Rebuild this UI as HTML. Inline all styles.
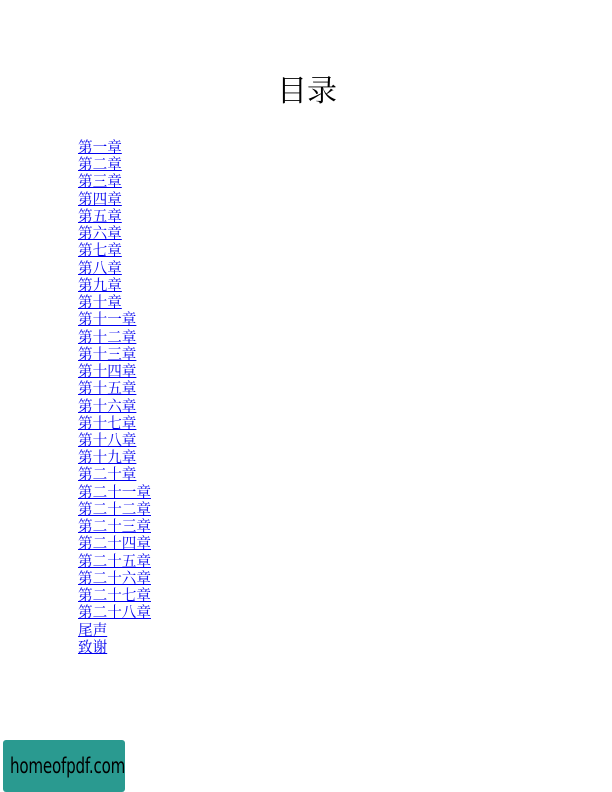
<!DOCTYPE html>
<html><head><meta charset="utf-8"><style>
body{margin:0;width:612px;height:792px;background:#fff;position:relative;overflow:hidden;font-family:"Liberation Serif","Noto Serif CJK SC",serif}
h1{position:absolute;top:72px;left:0;width:614px;text-align:center;margin:0;font-weight:normal;font-size:30px;line-height:40px;font-family:"Liberation Serif","Noto Serif CJK SC",serif}
ul{position:absolute;top:140px;left:78px;margin:0;padding:0;list-style:none}
li{height:17.24px;line-height:17.24px;font-size:14.6px;white-space:nowrap}
a{color:#0000ee;text-decoration:underline}
.logo{position:absolute;left:3px;top:740px;width:122px;height:52px;background:#2a9a90;border-radius:3px;overflow:hidden}
.logo span{position:absolute;left:7px;top:13px;font-family:"DejaVu Sans",sans-serif;font-size:21px;line-height:26px;color:#000;white-space:nowrap;transform:scaleX(0.72);transform-origin:0 0;letter-spacing:-0.3px}
</style></head><body>
<h1>目录</h1>
<ul>
<li><a>第一章</a></li><li><a>第二章</a></li><li><a>第三章</a></li><li><a>第四章</a></li><li><a>第五章</a></li><li><a>第六章</a></li><li><a>第七章</a></li><li><a>第八章</a></li><li><a>第九章</a></li><li><a>第十章</a></li>
<li><a>第十一章</a></li><li><a>第十二章</a></li><li><a>第十三章</a></li><li><a>第十四章</a></li><li><a>第十五章</a></li><li><a>第十六章</a></li><li><a>第十七章</a></li><li><a>第十八章</a></li><li><a>第十九章</a></li><li><a>第二十章</a></li>
<li><a>第二十一章</a></li><li><a>第二十二章</a></li><li><a>第二十三章</a></li><li><a>第二十四章</a></li><li><a>第二十五章</a></li><li><a>第二十六章</a></li><li><a>第二十七章</a></li><li><a>第二十八章</a></li><li><a>尾声</a></li><li><a>致谢</a></li>
</ul>
<div class="logo"><span>homeofpdf.com</span></div>
</body></html>
